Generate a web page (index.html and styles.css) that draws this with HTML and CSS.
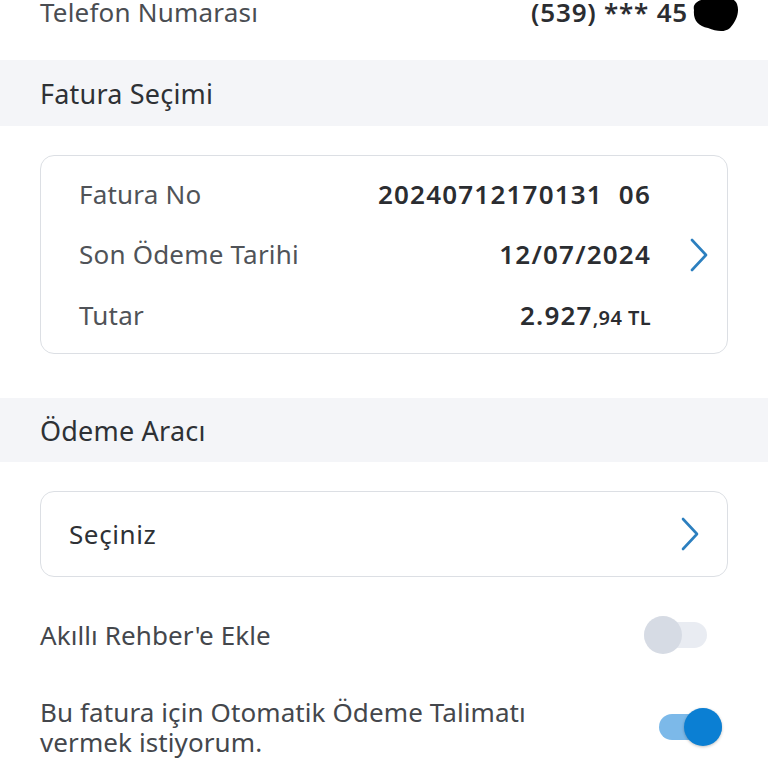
FILE: index.html
```html
<!DOCTYPE html>
<html lang="tr">
<head>
<meta charset="utf-8">
<title>Fatura Ödeme</title>
<link rel="stylesheet" href="styles.css">
</head>
<body>
<div class="page">
  <div class="phone-row">
    <span class="phone-label">Telefon Numarası</span>
    <span class="phone-value">(539) *** 45<svg class="blob" width="50" height="34" viewBox="0 0 50 34"><path d="M4 12 C2 4 12 0 22 1 C32 0 44 -2 47 6 C50 14 46 24 40 30 C34 35 26 33 18 30 C8 28 3 22 4 12 Z" fill="#000"/></svg></span>
  </div>

  <div class="section-head">Fatura Seçimi</div>

  <div class="block">
    <div class="card">
      <div class="rows">
        <div class="row"><span class="label">Fatura No</span><span class="value nums">20240712170131  06</span></div>
        <div class="row"><span class="label">Son Ödeme Tarihi</span><span class="value">12/07/2024</span></div>
        <div class="row"><span class="label">Tutar</span><span class="value">2.927<span class="small">,94 TL</span></span></div>
      </div>
      <div class="chev-col">
        <svg class="chev" width="18" height="34" viewBox="0 0 18 34"><path d="M2 2 L16 17 L2 32" fill="none" stroke="#2c7fbf" stroke-width="2.6" stroke-linecap="round" stroke-linejoin="round"/></svg>
      </div>
    </div>
  </div>

  <div class="section-head second">Ödeme Aracı</div>

  <div class="block">
    <div class="select">
      <span>Seçiniz</span>
      <svg class="chev" width="18" height="34" viewBox="0 0 18 34"><path d="M2 2 L16 17 L2 32" fill="none" stroke="#2c7fbf" stroke-width="2.6" stroke-linecap="round" stroke-linejoin="round"/></svg>
    </div>
  </div>

  <div class="opt-row first">
    <span class="opt-text">Akıllı Rehber'e Ekle</span>
    <span class="toggle off"><span class="thumb"></span></span>
  </div>

  <div class="opt-row">
    <span class="opt-text">Bu fatura için Otomatik Ödeme Talimatı<br>vermek istiyorum.</span>
    <span class="toggle on"><span class="thumb"></span></span>
  </div>
</div>
</body>
</html>
```

FILE: styles.css
```css
* { box-sizing: border-box; }
html, body { margin: 0; padding: 0; background: #ffffff; }
body {
  font-family: "Noto Sans", Lato, "Liberation Sans", sans-serif;
  color: #3a3d42;
  width: 768px;
  height: 768px;
  overflow: hidden;
}
.page { width: 768px; }

.phone-row {
  height: 60px;
  display: flex;
  justify-content: space-between;
  align-items: flex-start;
  padding: 0 28px 0 40px;
  font-size: 26px;
  line-height: 30px;
}
.phone-label { margin-top: -3px; color: #4a4d52; letter-spacing: 0.2px; }
.phone-value {
  margin-top: -3px;
  display: flex;
  align-items: flex-start;
  color: #2b2d31;
  font-weight: 600;
  letter-spacing: 0.8px;
}
.blob { margin-left: 2px; margin-top: 1px; }

.section-head {
  height: 66px;
  background: #f4f5f8;
  display: flex;
  align-items: center;
  padding-left: 40px;
  font-size: 27px;
  letter-spacing: 0.2px;
  color: #2e3135;
}
.section-head.second { margin-top: 44px; height: 64px; }

.block { padding: 29px 40px 0; }

.card {
  height: 199px;
  border: 1.5px solid #dcdfe4;
  border-radius: 14px;
  display: flex;
  padding: 8px 0;
}
.rows { flex: 1; display: flex; flex-direction: column; }
.row {
  height: 61px;
  display: flex;
  align-items: center;
  justify-content: space-between;
  padding-left: 38px;
  font-size: 26px;
}
.label { color: #505358; letter-spacing: 0.2px; }
.value { color: #2b2d31; font-weight: 600; letter-spacing: 1.2px; }
.nums { white-space: pre; }
.small { font-size: 20px; letter-spacing: 0.4px; }

.chev-col {
  width: 76px;
  display: flex;
  align-items: center;
  justify-content: flex-end;
  padding-right: 19px;
}

.select {
  height: 86px;
  border: 1.5px solid #dcdfe4;
  border-radius: 14px;
  display: flex;
  align-items: center;
  justify-content: space-between;
  padding: 0 28px 0 28px;
  font-size: 26px;
  letter-spacing: 0.6px;
  color: #2e3135;
}

.opt-row {
  display: flex;
  align-items: center;
  justify-content: space-between;
  padding: 0 40px;
  font-size: 26px;
  letter-spacing: 0.1px;
  line-height: 30px;
  color: #44474c;
}
.opt-row.first { margin-top: 40px; height: 36px; margin-bottom: 44px; }

.toggle {
  position: relative;
  width: 63px;
  height: 26px;
  border-radius: 13px;
  flex: none;
}
.toggle .thumb {
  position: absolute;
  top: -6px;
  width: 38px;
  height: 38px;
  border-radius: 50%;
}
.toggle.off { background: #e9ecf2; margin-right: 21px; }
.toggle.off .thumb { left: 0; background: #d6dbe4; }
.toggle.on { background: #7cb9e9; margin-right: 6px; }
.toggle.on .thumb { right: 0; background: #0b7fd3; box-shadow: 0 1px 3px rgba(0,0,0,0.25); }
```
